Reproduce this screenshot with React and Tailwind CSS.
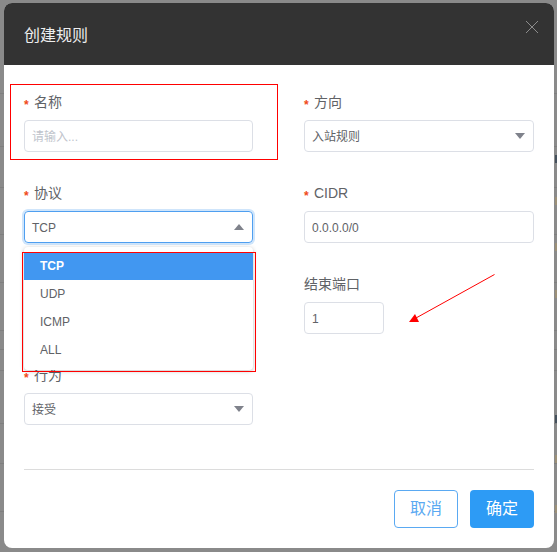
const FONT = "font-['Liberation_Sans','Noto_Sans_CJK_SC',sans-serif]";

function Field({ label, required, children, width = "w-full" }) {
  return (
    <div className={width}>
      <div className="flex h-5 items-center text-sm leading-5 text-[#606266]">
        {required && <span className="mr-1 mt-[5px] w-[5px] text-xs font-bold text-[#f04a1c]">*</span>}
        <span className={required ? "ml-[1px]" : ""}>{label}</span>
      </div>
      <div className="mt-2">{children}</div>
    </div>
  );
}

function Box({ value, placeholder, arrow, focus }) {
  return (
    <div
      className={`flex h-8 items-center justify-between rounded-[4px] border pl-[7px] pr-2 text-xs ${
        focus ? "border-[#4f9ff0] shadow-[0_0_0_2px_#cfe5fb]" : "border-[#dcdfe6]"
      } ${placeholder ? "text-[#c0c4cc]" : "text-[#606266]"}`}
    >
      <span className="translate-y-px">{value || placeholder}</span>
      {arrow && (
        <svg width="10" height="6" viewBox="0 0 10 6" className={arrow === "up" ? "rotate-180" : ""}>
          <path d="M0 0h10L5 6z" fill="#7f828b" />
        </svg>
      )}
    </div>
  );
}

export default function App() {
  return (
    <div className={`relative h-[552px] w-[557px] overflow-hidden bg-[#8a8a8a] ${FONT}`}>
      {/* dimmed table rows behind the dialog */}
      <div className="flex flex-col pt-[93px]">
        <div className="h-[53px] border-t border-[#7f7f7f]" />
        <div className="h-[41px] border-t border-[#7f7f7f]" />
        <div className="h-[47px] border-t border-[#7f7f7f]" />
        <div className="h-[48px] border-t border-[#7f7f7f]" />
        <div className="h-[48px] border-t border-[#7f7f7f]" />
        <div className="h-[19px] border-t border-[#7f7f7f]" />
        <div className="h-[21px] border-t border-[#7f7f7f]" />
        <div className="h-[53px] border-t border-[#7f7f7f]" />
        <div className="h-10 border-t border-[#7f7f7f]" />
        <div className="h-12 border-t border-[#7f7f7f]" />
        <div className="h-px border-t border-[#7f7f7f]" />
      </div>

      {/* bits of the page that stick out right of the dialog */}
      <div className="absolute left-[555px] top-[155px] h-2 w-[2px] bg-[#44505c]" />
      <div className="absolute left-[555px] top-[197px] h-2 w-[2px] bg-[#9c9078]" />
      <div className="absolute left-[555px] top-[243px] h-2 w-[2px] bg-[#9c9078]" />
      <div className="absolute left-[555px] top-[290px] h-2 w-[2px] bg-[#9c9078]" />
      <div className="absolute left-[555px] top-[415px] h-2 w-[2px] bg-[#44505c]" />
      <div className="absolute left-[555px] top-[455px] h-2 w-[2px] bg-[#9c9078]" />
      <div className="absolute left-[555px] top-[505px] h-2 w-[2px] bg-[#9c9078]" />

      <div className="absolute left-1 top-[3px] flex h-[545px] w-[550px] flex-col overflow-hidden rounded-lg bg-white">
        <div className="flex h-[62px] shrink-0 items-center justify-between bg-[#333333] pl-5 pr-[15px]">
          <span className="mt-1 text-base text-[#eeeeee]">创建规则</span>
          <svg width="14" height="14" viewBox="0 0 14 14" className="mb-[15px]" fill="none" stroke="#8c8c8c" strokeWidth="1">
            <path d="M1 1l12 12M13 1L1 13" />
          </svg>
        </div>

        <div className="grid grid-cols-[229px_230px] gap-x-[51px] gap-y-[31px] pl-5 pt-[27px]">
          <Field label="名称" required>
            <Box placeholder="请输入..." />
          </Field>
          <Field label="方向" required>
            <Box value="入站规则" arrow="down" />
          </Field>
          <Field label="协议" required>
            <Box value="TCP" arrow="up" focus />
          </Field>
          <Field label="CIDR" required>
            <Box value="0.0.0.0/0" />
          </Field>
          {/* this cell sits under the open menu */}
          <div />
          <Field label="结束端口" width="w-20">
            <Box value="1" />
          </Field>
          <Field label="行为" required>
            <Box value="接受" arrow="down" />
          </Field>
        </div>

        <div className="ml-5 mr-5 mt-11 border-t border-[#dcdcdc]" />

        <div className="mr-5 mt-5 flex justify-end gap-3">
          <button className="h-[38px] w-16 rounded-[4px] border border-[#5aa9f2] bg-white text-base text-[#5aa9f2]">取消</button>
          <button className="h-[38px] w-16 rounded-[4px] bg-[#2d9bf5] text-base text-white">确定</button>
        </div>
      </div>

      {/* open select menu */}
      <div className="absolute left-6 top-[247px] w-[229px] rounded-[4px] bg-white py-[6px] text-xs text-[#606266] shadow-[0_1px_4px_rgba(0,0,0,0.25)]">
        <div className="flex h-[27px] items-center bg-[#4197f1] pb-px pl-4 font-bold text-white">TCP</div>
        <div className="flex h-7 items-center pl-4">UDP</div>
        <div className="flex h-7 items-center pl-4">ICMP</div>
        <div className="flex h-7 items-center pl-4">ALL</div>
      </div>

      {/* red annotations from the screenshot */}
      <div className="absolute left-[10px] top-[84px] h-[76px] w-[268px] border border-[#ff0000]" />
      <div className="absolute left-[22px] top-[252px] h-[120px] w-[234px] border border-[#ff0000]" />
      <svg className="absolute left-[405px] top-[270px]" width="95" height="55" viewBox="0 0 95 55">
        <path d="M89.5 4.5L11 48" stroke="#ff0000" strokeWidth="1" fill="none" />
        <path d="M4 52h10l-4-8z" fill="#ff0000" />
      </svg>
    </div>
  );
}
